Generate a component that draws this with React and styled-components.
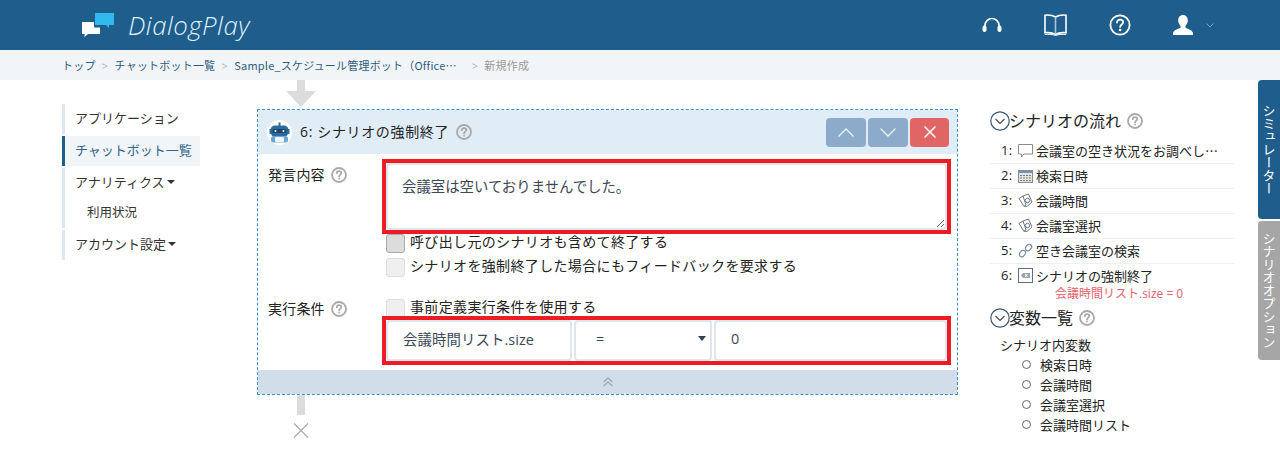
import React from "react";
import styled, { createGlobalStyle } from "styled-components";

const Global = createGlobalStyle`
  html, body { margin: 0; padding: 0; background: #fff; }
  body { font-family: "Open Sans", "Noto Sans CJK JP", sans-serif; font-size: 14px; color: #222; overflow: hidden; }
  * { box-sizing: border-box; }
`;

const Page = styled.div`position: relative; width: 1280px; height: 462px; overflow: hidden;`;
const Header = styled.header`display: flex; align-items: center; height: 50px; background: #1f5d8c; padding: 0 66px 0 82px;`;
const Logo = styled.div`display: flex; align-items: center; gap: 14px;`;
const LogoText = styled.span`font-family: "Open Sans", sans-serif; font-style: italic; font-weight: 300; font-size: 25.8px; color: #dff0fb; letter-spacing: .5px;`;
const HeaderIcons = styled.nav`display: flex; align-items: center; gap: 42px; margin-left: auto; color: #fff;`;
const UserMenu = styled.div`display: flex; align-items: center; gap: 13px;`;

const Crumbs = styled.div`display: flex; align-items: center; height: 30px; background: #f2f5f8; padding-left: 62px; font-size: 11px; letter-spacing: .2px; font-family: "Noto Sans CJK JP", sans-serif;`;
const Crumb = styled.span`white-space: nowrap; color: ${p => p.$muted ? "#999" : "#2f5b7e"};`;
const CrumbClip = styled(Crumb)`width: 224px; overflow: hidden; text-overflow: ellipsis;`;
const Sep = styled.span`color: #b3b3b3; width: ${p => p.$w || 19}px; text-align: ${p => p.$w ? "right" : "center"}; padding-right: ${p => p.$w ? 6 : 0}px; font-family: "Open Sans", sans-serif;`;

const Content = styled.div`display: flex; padding-left: 62px;`;
const Side = styled.aside`width: 138px; margin: 24px 57px 0 0; display: flex; flex-direction: column; gap: 2px;`;
const SideItem = styled.div`border-left: 3px solid ${p => p.$active ? "#1f5d8c" : "#dfe8f1"}; background: ${p => p.$active ? "#f2f5f8" : "transparent"}; color: ${p => p.$active ? "#2f648d" : "#333"}; font-size: 13px;`;
const SideLine = styled.div`display: flex; align-items: center; height: 30px; padding: 0 0 4px ${p => p.$sub ? "22px" : "10px"}; font-size: ${p => p.$sub ? "12.5px" : "13px"};`;
const Caret = styled.i`width: 0; height: 0; border: 4px solid transparent; border-top: 4px solid #333; border-bottom: 0; margin: 2px 0 0 2px;`;

const Main = styled.main`width: 701px; margin-right: 32px;`;
const Connector = styled.svg`display: block; margin-left: 28px;`;
const Card = styled.section`margin-top: 2px; border: 1px dashed #3c8ed0; height: 286px; display: flex; flex-direction: column;`;
const CardHead = styled.div`display: flex; align-items: center; height: 44px; flex: none; background: #e0edf7; padding: 0 8px 0 9px;`;
const CardTitle = styled.h2`margin: 0 7px 2px 8px; font-size: 14px; font-weight: 400; letter-spacing: .65px; color: #222;`;
const BtnGroup = styled.div`display: flex; gap: 2px; margin-left: auto;`;
const IconBtn = styled.button`display: flex; align-items: center; justify-content: center; width: ${p => p.$danger ? "39px" : "40px"}; height: 29px; border: 0; padding: 0; border-radius: 4px; background: ${p => p.$danger ? "#e06666" : "#8cabca"};`;
const Form = styled.div`flex: 1; display: grid; grid-template-columns: 124px 1fr; padding-top: 5px; align-content: start;`;
const FieldLabel = styled.div`display: flex; align-items: center; gap: 3px; height: 20px; margin: ${p => p.$top} 0 0 10px; font-size: 14px; letter-spacing: .2px;`;
const LabelText = styled.span`margin: -2px 3px 0 0;`;
const Field = styled.div`display: flex; flex-direction: column; width: 569px;`;
const RedBox = styled.div`position: relative; border: 4px solid #ed1c24; display: flex; gap: 2px; margin-top: ${p => p.$mt || 0}; height: ${p => p.$h};`;
const Area = styled.textarea`display: block; width: 100%; height: 100%; margin: 0; border: 2px solid #dfe6ec; border-radius: 4px; outline: 0; padding: 11px 14px; font: 14.4px "Noto Sans CJK JP", sans-serif; color: #3c4858; line-height: 20px; background: #fff;`;
const Check = styled.label`display: flex; align-items: flex-start; gap: 5px; height: 24px; padding-left: 4px; margin-top: ${p => p.$mt || 0}; font-size: 14px; letter-spacing: .35px; line-height: 16px;`;
const Box = styled.span`flex: none; width: 19px; height: 19px; border-radius: 3px; background: ${p => p.$on ? "#dcdcdc" : "#efefef"}; border: 1px solid ${p => p.$on ? "#a9a9a9" : "#dedede"};`;
const Input = styled.input`flex: ${p => p.$grow || "none"}; width: ${p => p.$w || "auto"}; min-width: 0; height: 100%; margin: 0; border: 2px solid #dfe6ec; border-radius: 4px; outline: 0; padding: 0 15px 5px; font: 14.4px "Open Sans", "Noto Sans CJK JP", sans-serif; letter-spacing: .1px; color: #3c4858; background: #fff;`;
const SelectWrap = styled.div`position: relative; flex: none; width: 138px; &::after { content: ""; position: absolute; right: 6px; top: 16px; border: 4px solid transparent; border-top: 5px solid #333f4d; border-bottom: 0; }`;
const Select = styled.select`appearance: none; width: 100%; height: 100%; border: 2px solid #dfe6ec; border-radius: 4px; outline: 0; padding: 0 20px 5px; font: 14.4px "Open Sans", sans-serif; color: #3c4858; background: #fff;`;
const Collapse = styled.div`flex: none; display: flex; align-items: center; justify-content: center; height: 24px; background: #d1dde8; margin-top: auto;`;

const Right = styled.aside`width: 244px; padding-top: 30px;`;
const Heading = styled.h3`display: flex; align-items: center; height: 21px; margin: 0; font-size: 16px; font-weight: 400; color: #222;`;
const HeadingText = styled.span`margin: -2px 0 0 -1px;`;
const HeadingHelp = styled.span`display: flex; margin-left: 6px;`;
const Flow = styled.ol`list-style: none; margin: 8px 0 6px; padding: 0;`;
const FlowRow = styled.li`display: flex; align-items: center; height: 25px; padding: 0 0 2px 11px; border-bottom: 1px solid ${p => p.$last ? "transparent" : "#eef1f4"}; font-size: 13px; color: #222;`;
const FlowNum = styled.span`width: 17px; flex: none; letter-spacing: .3px;`;
const FlowIcon = styled.svg`flex: none; margin-right: 3px;`;
const FlowText = styled.span`white-space: nowrap; overflow: hidden; text-overflow: ellipsis; font-family: "Noto Sans CJK JP", sans-serif; max-width: ${p => p.$max || "none"};`;
const Condition = styled.div`height: 14px; line-height: 14px; margin-top: -2px; padding-left: 65px; font-size: 12px; color: #e8606b;`;
const VarTitle = styled.div`font-size: 13px; height: 19px; line-height: 18px; margin: 8px 0 0 10px; color: #222;`;
const VarList = styled.ul`list-style: none; margin: 0; padding: 0 0 0 32px;`;
const VarItem = styled.li`display: flex; align-items: center; gap: 9px; height: 20px; padding-bottom: 1px; font-size: 13px; color: #222; &::before { content: ""; width: 7px; height: 7px; border: 1.5px solid #666; border-radius: 50%; }`;

const Tab = styled.div`position: absolute; right: 0; top: ${p => p.$top}px; height: ${p => p.$h}px; width: 22px; display: flex; align-items: center; justify-content: center; border-radius: 4px 0 0 4px; background: ${p => p.$bg}; color: #fff; font-size: 13px; writing-mode: vertical-rl; font-family: "Noto Sans CJK JP", sans-serif;`;

const Help = ({ size = 16, color = "#a9a9a9", sw = 1.8 }) => (
  <svg width={size} height={size} viewBox="0 0 16 16" fill="none" style={{ flex: "none" }}>
    <circle cx="8" cy="8" r="7" stroke={color} strokeWidth={sw} />
    <path d="M5.8 6.2c0-1.3 1-2.1 2.3-2.1s2.2.8 2.2 1.9c0 1.6-2.2 1.7-2.2 3.4" stroke={color} strokeWidth={sw} strokeLinecap="round" />
    <circle cx="8.1" cy="11.6" r=".95" fill={color} />
  </svg>
);

const CircleChevron = () => (
  <svg width="20" height="20" viewBox="0 0 20 20" fill="none" style={{ flex: "none" }}>
    <circle cx="10" cy="10" r="9.2" stroke="#3b5878" strokeWidth="1.2" />
    <path d="M5.5 8l4.5 4.5L14.5 8" stroke="#3c4550" strokeWidth="1.1" />
  </svg>
);

const Chev = ({ up }) => (
  <svg width="16" height="9" viewBox="0 0 16 9" fill="none"><path d={up ? "M.5 8.5L8 1l7.5 7.5" : "M.5.5L8 8 15.500.5"} stroke="#eef3f8" strokeWidth="1.300" /></svg>
);

const BotIcon = () => (
  <svg width="25" height="25" viewBox="0 0 25 25">
    <circle cx="12.500" cy="12.500" r="12.500" fill="#fff" />
    <rect x="11.500" y="2.500" width="2" height="4" fill="#2c6b9e" />
    <rect x="3.500" y="5.500" width="18" height="11" rx="4.500" fill="#2c6b9e" />
    <rect x="2.500" y="9" width="2" height="5" fill="#2c6b9e" /><rect x="20.500" y="9" width="2" height="5" fill="#2c6b9e" />
    <rect x="5.500" y="9" width="14" height="4" rx="1.500" fill="#1d4668" />
    <circle cx="8.500" cy="11" r="1" fill="#fff" /><circle cx="16.500" cy="11" r="1" fill="#fff" />
    <rect x="4" y="16" width="17" height="6.500" rx="2.500" fill="#6ea7d3" />
    <rect x="8" y="17" width="9" height="5" rx="1" fill="#f1f6fa" />
  </svg>
);

const CardsIcon = () => (
  <FlowIcon width="15" height="15" viewBox="0 0 15 15" fill="none" stroke="#777">
    <path d="M1 5.500l4-2.500 3 9-2 1.500z" /><path d="M5 3l5.500-2 3.500 8-5 4.500L6 13" />
    <circle cx="9.500" cy="7.500" r="2.200" stroke="#5f7fa0" />
  </FlowIcon>
);

const vars = ["検索日時", "会議時間", "会議室選択", "会議時間リスト"];

export default function App() {
  return (
    <Page>
      <Global />
      <Header>
        <Logo>
          <svg width="32" height="24" viewBox="0 0 32 24">
            <path d="M13 0h19v12h-5v3l-3-3H13z" fill="#2fb9ec" />
            <path d="M0 9h12v5.500h6V21H6l-3.500 3v-3H0z" fill="#fff" />
          </svg>
          <LogoText>DialogPlay</LogoText>
        </Logo>
        <HeaderIcons>
          <svg width="20" height="16" viewBox="0 0 20 16" fill="none">
            <path d="M3 10V8.500a7 7 0 0 1 14 0V10" stroke="#fff" strokeWidth="1.700" />
            <rect x="0.500" y="8.500" width="4" height="6.500" rx="2" fill="#fff" /><rect x="15.500" y="8.500" width="4" height="6.500" rx="2" fill="#fff" />
          </svg>
          <svg width="23" height="22" viewBox="0 0 23 22" fill="none" stroke="#fff" strokeWidth="1.600">
            <path d="M11.500 3C9 1.500 5 .8 1 1.200v17.600c4-.4 8 .2 10.500 1.500 2.500-1.300 6.500-1.900 10.500-1.500V1.200C18 .8 14 1.500 11.500 3z" />
            <path d="M11.500 3v17" stroke="#a9c4da" />
            <path d="M0.800 20.500c4-.5 8 0 10.700 1 2.700-1 6.700-1.500 10.700-1" strokeWidth="1" />
          </svg>
          <Help size={22} color="#fff" sw={1.300} />
          <UserMenu>
            <svg width="20" height="20" viewBox="0 0 20 20" fill="#fff">
              <path d="M10 0c3 0 4.800 2.300 4.800 5.300 0 2.300-1 4.300-2.300 5.700v1.700c2.800 1.200 6.500 2.400 7.500 5.100V20H0v-2.200c1-2.700 4.700-3.900 7.500-5.100V11C6.200 9.600 5.200 7.600 5.200 5.300 5.200 2.300 7 0 10 0z" />
            </svg>
            <svg width="8" height="5" viewBox="0 0 8 5" fill="none"><path d="M.5.500L4 4 7.500.5" stroke="#7f9fb8" /></svg>
          </UserMenu>
        </HeaderIcons>
      </Header>

      <Crumbs>
        <Crumb>トップ</Crumb><Sep>&gt;</Sep>
        <Crumb>チャットボット一覧</Crumb><Sep>&gt;</Sep>
        <CrumbClip>Sample_スケジュール管理ボット（Office365連携）</CrumbClip><Sep $w={26}>&gt;</Sep>
        <Crumb $muted>新規作成</Crumb>
      </Crumbs>

      <Content>
        <Side>
          <SideItem><SideLine>アプリケーション</SideLine></SideItem>
          <SideItem $active><SideLine>チャットボット一覧</SideLine></SideItem>
          <SideItem><SideLine>アナリティクス<Caret /></SideLine><SideLine $sub>利用状況</SideLine></SideItem>
          <SideItem><SideLine>アカウント設定<Caret /></SideLine></SideItem>
        </Side>

        <Main>
          <Connector width="34" height="27" viewBox="0 0 34 27">
            <path d="M12 0h8v11h11L16 27 1 11h11z" fill="#dcdcdc" />
          </Connector>
          <Card>
            <CardHead>
              <BotIcon />
              <CardTitle>6: シナリオの強制終了</CardTitle>
              <Help />
              <BtnGroup>
                <IconBtn aria-label="up"><Chev up /></IconBtn>
                <IconBtn aria-label="down"><Chev /></IconBtn>
                <IconBtn $danger aria-label="delete">
                  <svg width="12" height="12" viewBox="0 0 12 12" fill="none"><path d="M.5.500l11 11M11.500.500l-11 11" stroke="#fff" strokeWidth="1.500" /></svg>
                </IconBtn>
              </BtnGroup>
            </CardHead>
            <Form>
              <FieldLabel $top="6px"><LabelText>発言内容</LabelText><Help /></FieldLabel>
              <Field>
                <RedBox $h="75px"><Area defaultValue="会議室は空いておりませんでした。" /></RedBox>
                <Check><Box $on /><span>呼び出し元のシナリオも含めて終了する</span></Check>
                <Check><Box /><span>シナリオを強制終了した場合にもフィードバックを要求する</span></Check>
              </Field>
              <FieldLabel $top="17px"><LabelText>実行条件</LabelText><Help /></FieldLabel>
              <Field>
                <Check $mt="17px"><Box /><span>事前定義実行条件を使用する</span></Check>
                <RedBox $h="49px" $mt="-7px">
                  <Input $w="186px" defaultValue="会議時間リスト.size" readOnly />
                  <SelectWrap><Select defaultValue="="><option>=</option></Select></SelectWrap>
                  <Input $grow="1" defaultValue="0" readOnly />
                </RedBox>
              </Field>
            </Form>
            <Collapse>
              <svg width="10" height="10" viewBox="0 0 10 10" fill="none" stroke="#9aa5b0" strokeWidth="1.100"><path d="M.5 5L5 1l4.500 4M.5 9L5 5l4.500 4" /></svg>
            </Collapse>
          </Card>
          <Connector width="34" height="43" viewBox="0 0 34 43">
            <rect x="12" y="0" width="8" height="20" fill="#dcdcdc" />
            <path d="M9 28.500l14 14M23 28.500l-14 14" stroke="#a9a9a9" strokeWidth="1.100" fill="none" />
          </Connector>
        </Main>

        <Right>
          <Heading><CircleChevron /><HeadingText>シナリオの流れ</HeadingText><HeadingHelp><Help /></HeadingHelp></Heading>
          <Flow>
            <FlowRow><FlowNum>1:</FlowNum>
              <FlowIcon width="15" height="15" viewBox="0 0 15 15" fill="none" stroke="#8b8b8b"><path d="M.5 1.500h14v9.500H6l-2.500 3v-3h-3z" /></FlowIcon>
              <FlowText $max="183px">会議室の空き状況をお調べします。少々お待ちください</FlowText></FlowRow>
            <FlowRow><FlowNum>2:</FlowNum>
              <FlowIcon width="15" height="15" viewBox="0 0 15 15" fill="none"><rect x=".5" y="2.500" width="14" height="12" fill="#e8e4dc" stroke="#8b8b8b" /><rect x="1" y="2" width="13" height="3" fill="#7b8fb0" /><path d="M2 7.500h11M2 10h11M2 12.500h11" stroke="#6e7f99" strokeDasharray="2 1" /></FlowIcon>
              <FlowText>検索日時</FlowText></FlowRow>
            <FlowRow><FlowNum>3:</FlowNum><CardsIcon /><FlowText>会議時間</FlowText></FlowRow>
            <FlowRow><FlowNum>4:</FlowNum><CardsIcon /><FlowText>会議室選択</FlowText></FlowRow>
            <FlowRow><FlowNum>5:</FlowNum>
              <FlowIcon width="15" height="15" viewBox="0 0 15 15" fill="none" stroke="#7a8a9c" strokeWidth="1.200"><rect x="8" y="1" width="5" height="7" rx="2.500" transform="rotate(40 10.500 4.500)" /><rect x="2" y="7" width="5" height="7" rx="2.500" transform="rotate(40 4.500 10.500)" /></FlowIcon>
              <FlowText>空き会議室の検索</FlowText></FlowRow>
            <FlowRow $last><FlowNum>6:</FlowNum>
              <FlowIcon width="15" height="15" viewBox="0 0 15 15" fill="none"><rect x=".5" y=".5" width="14" height="14" stroke="#5b6f8c" /><path d="M5 5h7v5H5L3 7.500z" fill="#9aa3ad" /><path d="M7 6l2.500 3M9.500 6L7 9" stroke="#fff" /></FlowIcon>
              <FlowText>シナリオの強制終了</FlowText></FlowRow>
            <Condition>会議時間リスト.size = 0</Condition>
          </Flow>
          <Heading><CircleChevron /><HeadingText>変数一覧</HeadingText><HeadingHelp><Help /></HeadingHelp></Heading>
          <VarTitle>シナリオ内変数</VarTitle>
          <VarList>{vars.map(v => <VarItem key={v}>{v}</VarItem>)}</VarList>
        </Right>
      </Content>

      <Tab $top={80} $h={139} $bg="#1f5d8c">シミュレーター</Tab>
      <Tab $top={221} $h={139} $bg="#a6a6a6">シナリオオプション</Tab>
    </Page>
  );
}
